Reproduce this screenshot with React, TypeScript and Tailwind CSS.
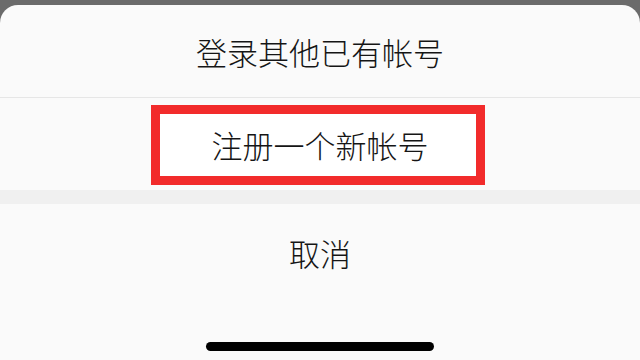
export default function App() {
  return (
    <div
      className="w-[640px] h-[360px] overflow-hidden bg-[#6b6b6b] pt-[5px]"
      style={{ fontFamily: '"Noto Sans CJK SC", "Noto Sans", sans-serif' }}
    >
      <div className="flex h-full flex-col rounded-t-[18px] bg-[#fafafa] font-light text-[#151515]">
        <div className="flex h-[92px] items-center justify-center text-[31px] leading-none">
          登录其他已有帐号
        </div>
        <div className="h-px bg-[#e6e6e6]"></div>
        <div className="flex h-[90px] items-center justify-center">
          <div className="ml-[-4px] mt-[4px] flex h-[80px] w-[334px] items-center justify-center border-[9px] border-[#f22b2b] bg-white text-[31px] leading-none">
            <span className="mt-[-2px] ml-[4px]">注册一个新帐号</span>
          </div>
        </div>
        <div className="mt-[2px] h-[14px] bg-[#f0f0f0]"></div>
        <div className="flex flex-1 flex-col items-center">
          <div className="flex h-[96px] items-center justify-center text-[31px] leading-none">
            取消
          </div>
          <div className="mt-[42px] h-[9px] w-[228px] rounded-full bg-black"></div>
        </div>
      </div>
    </div>
  );
}
